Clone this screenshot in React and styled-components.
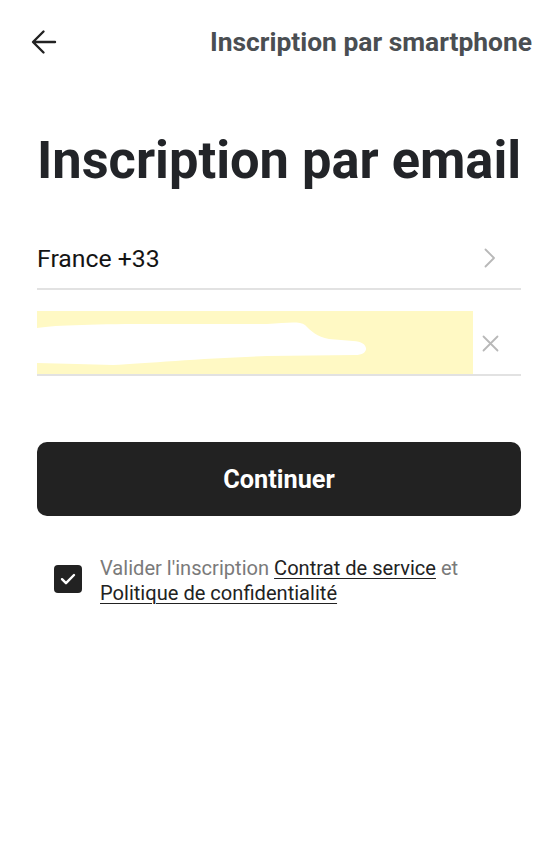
import styled, { createGlobalStyle } from 'styled-components';

const Global = createGlobalStyle`
  body {
    margin: 0;
    background: #fff;
    font-family: Roboto, "Noto Sans", sans-serif;
  }
`;

const Page = styled.div`
  width: 558px;
  min-height: 867px;
  box-sizing: border-box;
  padding: 0 37px;
  display: flex;
  flex-direction: column;
`;

const Header = styled.header`
  height: 84px;
  display: flex;
  align-items: center;
  justify-content: space-between;
  margin: 0 -11px 0 -7px;
`;

const BackButton = styled.button`
  border: none;
  background: none;
  padding: 0;
  width: 28px;
  height: 28px;
  display: flex;
  align-items: center;
  justify-content: center;
  color: #222;
`;

const SwitchLink = styled.span`
  font-size: 26.4px;
  font-weight: 700;
  color: #4a4e52;
`;

const Title = styled.h1`
  margin: 42px 0 0;
  font-size: 52.4px;
  line-height: 68px;
  font-weight: 700;
  color: #222428;
  white-space: nowrap;
`;

const Row = styled.div`
  height: ${(p) => p.h}px;
  padding-top: ${(p) => p.pt || 0}px;
  display: flex;
  align-items: center;
  justify-content: space-between;
  border-bottom: 2px solid #e2e2e2;
  box-sizing: border-box;
`;

const RowLabel = styled.span`
  font-size: 24.8px;
  color: #141414;
`;

const Filled = styled.div`
  align-self: stretch;
  width: 437px;
  margin-top: 21px;
  background: #fff9c4;
  display: flex;
  align-items: stretch;
`;

const IconSlot = styled.span`
  width: 34px;
  display: flex;
  justify-content: center;
  color: #b8b8b8;
  margin-right: 14px;
  padding-top: ${(p) => p.pt || 0}px;
`;

const Primary = styled.button`
  margin-top: 66px;
  height: 74px;
  border: none;
  border-radius: 10px;
  background: #222222;
  color: #fff;
  font-family: Roboto, sans-serif;
  font-size: 25.3px;
  font-weight: 700;
`;

const Agreement = styled.div`
  margin-top: 40px;
  padding-left: 17px;
  display: flex;
  gap: 18px;
  align-items: flex-start;
`;

const Box = styled.span`
  flex: none;
  margin-top: 9px;
  width: 28px;
  height: 28px;
  border-radius: 4px;
  background: #222;
  display: flex;
  align-items: center;
  justify-content: center;
`;

const Terms = styled.p`
  margin: 0;
  font-size: 20.1px;
  line-height: 25px;
  color: #7a7a7a;
`;

const TermLink = styled.a`
  color: #222;
  text-decoration: underline;
  text-underline-offset: 3px;
  text-decoration-thickness: 1px;
`;

export default function App() {
  return (
    <>
      <Global />
      <Page>
        <Header>
          <BackButton aria-label="Retour">
            <svg width="28" height="28" viewBox="0 0 28 28" fill="none" stroke="currentColor" strokeWidth="2.4" strokeLinecap="round" strokeLinejoin="round">
              <path d="M25 14H3.5M13.5 3.5 3 14l10.5 10.5" />
            </svg>
          </BackButton>
          <SwitchLink>Inscription par smartphone</SwitchLink>
        </Header>
        <Title>Inscription par email</Title>
        <Row h={90} pt={28} style={{ marginTop: 6 }}>
          <RowLabel>France +33</RowLabel>
          <IconSlot>
            <svg width="12" height="20" viewBox="0 0 12 20" fill="none" stroke="currentColor" strokeWidth="1.8" strokeLinecap="round" strokeLinejoin="round">
              <path d="M1.5 1.5 10 10l-8.5 8.5" />
            </svg>
          </IconSlot>
        </Row>
        <Row h={86}>
          <Filled>
            <svg width="340" height="62" viewBox="0 0 340 62" fill="#fff">
              <path d="M0 17 C20 14 60 13 120 13 L230 13 C250 12 262 10 268 14 C274 20 280 26 292 28 L316 30 C332 30 334 44 318 44 L230 45 C170 47 110 52 76 54 L40 53 L0 52 Z" />
            </svg>
          </Filled>
          <IconSlot pt={22}>
            <svg width="17" height="17" viewBox="0 0 17 17" fill="none" stroke="currentColor" strokeWidth="1.8" strokeLinecap="round">
              <path d="M1.5 1.5l14 14M15.5 1.5l-14 14" />
            </svg>
          </IconSlot>
        </Row>
        <Primary>Continuer</Primary>
        <Agreement>
          <Box>
            <svg width="16" height="12" viewBox="0 0 16 12" fill="none" stroke="#fff" strokeWidth="2.4" strokeLinecap="round" strokeLinejoin="round">
              <path d="M2 6.2l4 4L14 2" />
            </svg>
          </Box>
          <Terms>
            Valider l'inscription <TermLink>Contrat de service</TermLink> et{' '}
            <TermLink>Politique de confidentialité</TermLink>
          </Terms>
        </Agreement>
      </Page>
    </>
  );
}
